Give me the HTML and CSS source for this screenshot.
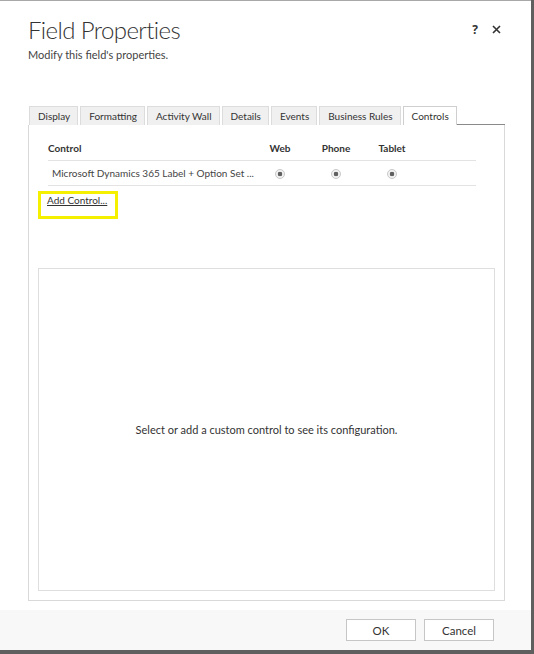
FILE: index.html
```html
<!DOCTYPE html>
<html>
<head>
<meta charset="utf-8">
<link rel="stylesheet" href="styles.css">
</head>
<body>
<div class="dialog">
  <div class="header">
    <div class="titles">
      <h1 class="title">Field Properties</h1>
      <div class="subtitle">Modify this field's properties.</div>
    </div>
    <div class="actions">
      <span class="help">?</span>
      <svg class="close" width="9" height="9" viewBox="0 0 9 9"><path d="M1 1L8 8M8 1L1 8" stroke="#333" stroke-width="1.6" fill="none"/></svg>
    </div>
  </div>
  <div class="tabs-area">
    <div class="tabs">
      <div class="tab">Display</div>
      <div class="tab">Formatting</div>
      <div class="tab">Activity Wall</div>
      <div class="tab">Details</div>
      <div class="tab">Events</div>
      <div class="tab">Business Rules</div>
      <div class="tab active">Controls</div>
      <div class="tab-fill"></div>
    </div>
    <div class="panel">
      <div class="grid head">
        <div class="c-name">Control</div>
        <div class="c-dev">Web</div>
        <div class="c-dev">Phone</div>
        <div class="c-dev">Tablet</div>
        <div></div>
      </div>
      <div class="grid row">
        <div class="c-name row-name">Microsoft Dynamics 365 Label + Option Set ...</div>
        <div class="c-dev"><span class="radio"></span></div>
        <div class="c-dev"><span class="radio"></span></div>
        <div class="c-dev"><span class="radio"></span></div>
        <div></div>
      </div>
      <div class="add-wrap"><a class="add">Add Control...</a></div>
      <div class="config">Select or add a custom control to see its configuration.</div>
    </div>
  </div>
  <div class="footer">
    <button class="btn">OK</button>
    <button class="btn">Cancel</button>
  </div>
</div>
</body>
</html>
```
FILE: styles.css
```css
html, body {
  margin: 0;
  padding: 0;
}
body {
  background: #5f5f5f;
  width: 534px;
  height: 654px;
  overflow: hidden;
  font-family: "Lato", "Open Sans", sans-serif;
  color: #444;
}
.dialog {
  width: 531px;
  height: 650px;
  background: #fff;
  border-top: 1px solid #a8a8a8;
  display: flex;
  flex-direction: column;
  box-sizing: border-box;
}
.header {
  display: flex;
  justify-content: space-between;
  padding: 14px 28px 0 28px;
  height: 105px;
  flex: none;
  box-sizing: border-box;
}
.title {
  margin: 0;
  font-weight: 300;
  font-size: 24px;
  line-height: 30px;
  color: #333;
  letter-spacing: -0.6px;
}
.subtitle {
  font-size: 11px;
  line-height: 14px;
  margin-top: 3px;
  color: #444;
}
.actions {
  display: flex;
  gap: 14px;
  align-items: center;
  height: 28px;
  margin-right: 2px;
}
.help {
  font-size: 12px;
  font-weight: 700;
  color: #333;
  font-family: "Open Sans", sans-serif;
}
.tabs-area {
  margin-left: 28px;
  width: 477px;
  flex: none;
}
.tabs {
  display: flex;
  gap: 2px;
  height: 19px;
  padding-left: 1px;
}
.tab {
  background: #f0f0f0;
  border: 1px solid #dcdcdc;
  border-bottom: none;
  font-size: 10px;
  line-height: 18px;
  padding: 0 7px 0 8px;
  color: #333;
}
.tab.active {
  background: #fff;
  border-color: #cfcfcf;
}
.tab-fill {
  flex: 1;
  border-bottom: 1px solid #8a8a8a;
  margin-left: -2px;
}
.panel {
  height: 476px;
  box-sizing: border-box;
  border: 1px solid #d9d9d9;
  border-top: none;
  display: flex;
  flex-direction: column;
  padding: 0 9px 9px 9px;
}
.grid {
  display: grid;
  grid-template-columns: 204px 56px 56px 56px 56px;
  margin-left: 10px;
  width: 428px;
  font-size: 10px;
}
.head {
  margin-top: 11px;
  height: 24px;
  align-items: center;
  border-bottom: 1px solid #e3e3e3;
  font-weight: 700;
  color: #333;
}
.row {
  height: 24px;
  align-items: center;
  border-bottom: 1px solid #e3e3e3;
  color: #444;
}
.row-name {
  padding-left: 4px;
  white-space: nowrap;
}
.c-dev {
  text-align: center;
}
.radio {
  display: inline-block;
  width: 8px;
  height: 8px;
  border: 1px solid #c8c8c8;
  border-radius: 50%;
  background: radial-gradient(circle, #606060 0, #606060 2px, #f2f2f2 2.6px);
  vertical-align: middle;
}
.add-wrap {
  display: inline-flex;
  align-self: flex-start;
  margin-top: 5px;
  border: 3px solid #f5f000;
  width: 68px;
  height: 22px;
  padding-left: 6px;
  box-sizing: content-box;
}
.add {
  font-size: 10px;
  color: #333;
  text-decoration: underline;
  line-height: 13px;
}
.config {
  flex: 1;
  margin-top: 49px;
  border: 1px solid #dedede;
  display: flex;
  align-items: center;
  justify-content: center;
  font-size: 11px;
  color: #333;
}
.footer {
  margin-top: 9px;
  flex: 1;
  background: #f8f8f8;
  display: flex;
  justify-content: flex-end;
  gap: 8px;
  padding: 9px 37px 0 0;
}
.btn {
  width: 70px;
  height: 22px;
  background: #fff;
  border: 1px solid #c6c6c6;
  font-family: "Lato", "Open Sans", sans-serif;
  font-size: 11.5px;
  color: #333;
  padding: 0;
}
```
